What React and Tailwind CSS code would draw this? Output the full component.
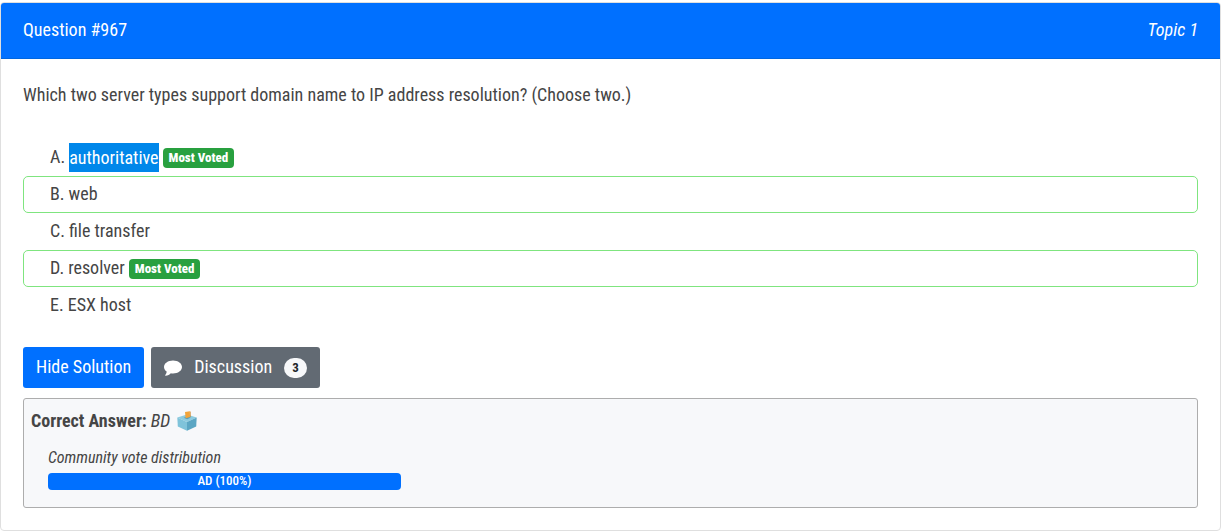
const choices = [
  { letter: "A", text: "authoritative", selected: true, voted: true },
  { letter: "B", text: "web", correct: true },
  { letter: "C", text: "file transfer" },
  { letter: "D", text: "resolver", correct: true, voted: true },
  { letter: "E", text: "ESX host" },
];

function BallotBox() {
  return (
    <svg viewBox="0 0 20 20" className="size-5" role="img" aria-label="Ballot box">
      <path d="M0.3 6.6 10 3.6l9.700 3L10 11z" fill="#8ccbdf" />
      <path d="M0.3 6.6 10 11V19.8L0.8 15.400z" fill="#7fc3da" />
      <path d="M19.7 6.6 10 11V19.8l9.200-4.400z" fill="#5ba6c3" />
      <path d="M6.600 6.800 10.400 5.400l3.600 1.200-3.800 1.700z" fill="#5f9db3" />
      <path d="M8 1.100 12.800 0.300l.2 5.800-4.400 1.100z" fill="#f2a43a" />
      <path d="M12.8 0.300l.8.500v5.100l-.6.200z" fill="#cf8428" />
    </svg>
  );
}

function Choice({ letter, text, selected, correct, voted }) {
  return (
    <li
      className={
        "flex h-[37px] items-center gap-1 rounded-[5px] border pb-px pl-[26px] " +
        (correct ? "border-[#7fe57f]" : "border-transparent")
      }
    >
      <span>{letter}.</span>
      <span className={selected ? "bg-[#0087ea] leading-[29px] text-white" : ""}>{text}</span>
      {voted && (
        <span className="mt-0.5 rounded bg-[#28a03f] px-1.5 text-[13px] leading-5 font-extrabold text-white">
          Most Voted
        </span>
      )}
    </li>
  );
}

export default function App() {
  return (
    <main className="pt-0.5 pr-px font-['Roboto_Condensed','Liberation_Sans_Narrow',Roboto,sans-serif] text-[18px] leading-6 text-[#454545]">
      <article className="rounded border border-[#dfdfdf] bg-white">
        <header className="flex items-start justify-between rounded-t-[3px] border-b border-[#0066e0] bg-[#0070ff] px-[22px] pt-[15px] pb-4 text-white">
          <h1>Question #967</h1>
          <span className="italic">Topic 1</span>
        </header>
        <div className="px-[22px] pt-6 pb-[22px]">
          <p>Which two server types support domain name to IP address resolution? (Choose two.)</p>
          <ul className="mt-8">
            {choices.map((c) => (
              <Choice key={c.letter} {...c} />
            ))}
          </ul>
          <div className="mt-[23px] flex gap-[7px]">
            <button type="button" className="h-[41px] rounded-[3px] bg-[#0070ff] px-[13px] pb-0.5 text-white">
              Hide Solution
            </button>
            <button
              type="button"
              className="flex h-[41px] items-center rounded-[3px] bg-[#626a73] px-[13px] text-white"
            >
              <svg viewBox="0 0 18 16" className="h-4 w-[18px] fill-current" aria-hidden="true">
                <path d="M9 0.5C4 0.5 0 3.4 0 7c0 1.9 1 3.5 2.7 4.6C2.6 13 2 14.2 1.2 15.2c-.2.3 0 .6.4.6 2.2-.3 4-1.3 5.2-2.6.7.2 1.4.3 2.2.3 5 0 9-2.9 9-6.5S14 .5 9 .5z" />
              </svg>
              <span className="ml-3 pb-0.5">Discussion</span>
              <span className="ml-3 rounded-full bg-[#f7f8fa] px-2 text-[13px] leading-5 font-bold text-[#212529]">
                3
              </span>
            </button>
          </div>
          <section className="mt-2.5 rounded-[3px] border border-[#adadad] bg-[#f7f8fa] px-[7px] pt-2.5 pb-[17px]">
            <div className="flex items-center">
              <strong>Correct Answer:</strong>
              <em className="ml-1">BD</em>
              <span className="ml-[7px]">
                <BallotBox />
              </span>
            </div>
            <div className="mt-[13px] ml-[17px] max-w-[353px]">
              <p className="text-[16px] italic">Community vote distribution</p>
              <div className="mt-[3px] rounded bg-[#0070ff] pb-px text-center text-[13px] leading-4 font-medium text-white">
                AD (100%)
              </div>
            </div>
          </section>
        </div>
      </article>
    </main>
  );
}
